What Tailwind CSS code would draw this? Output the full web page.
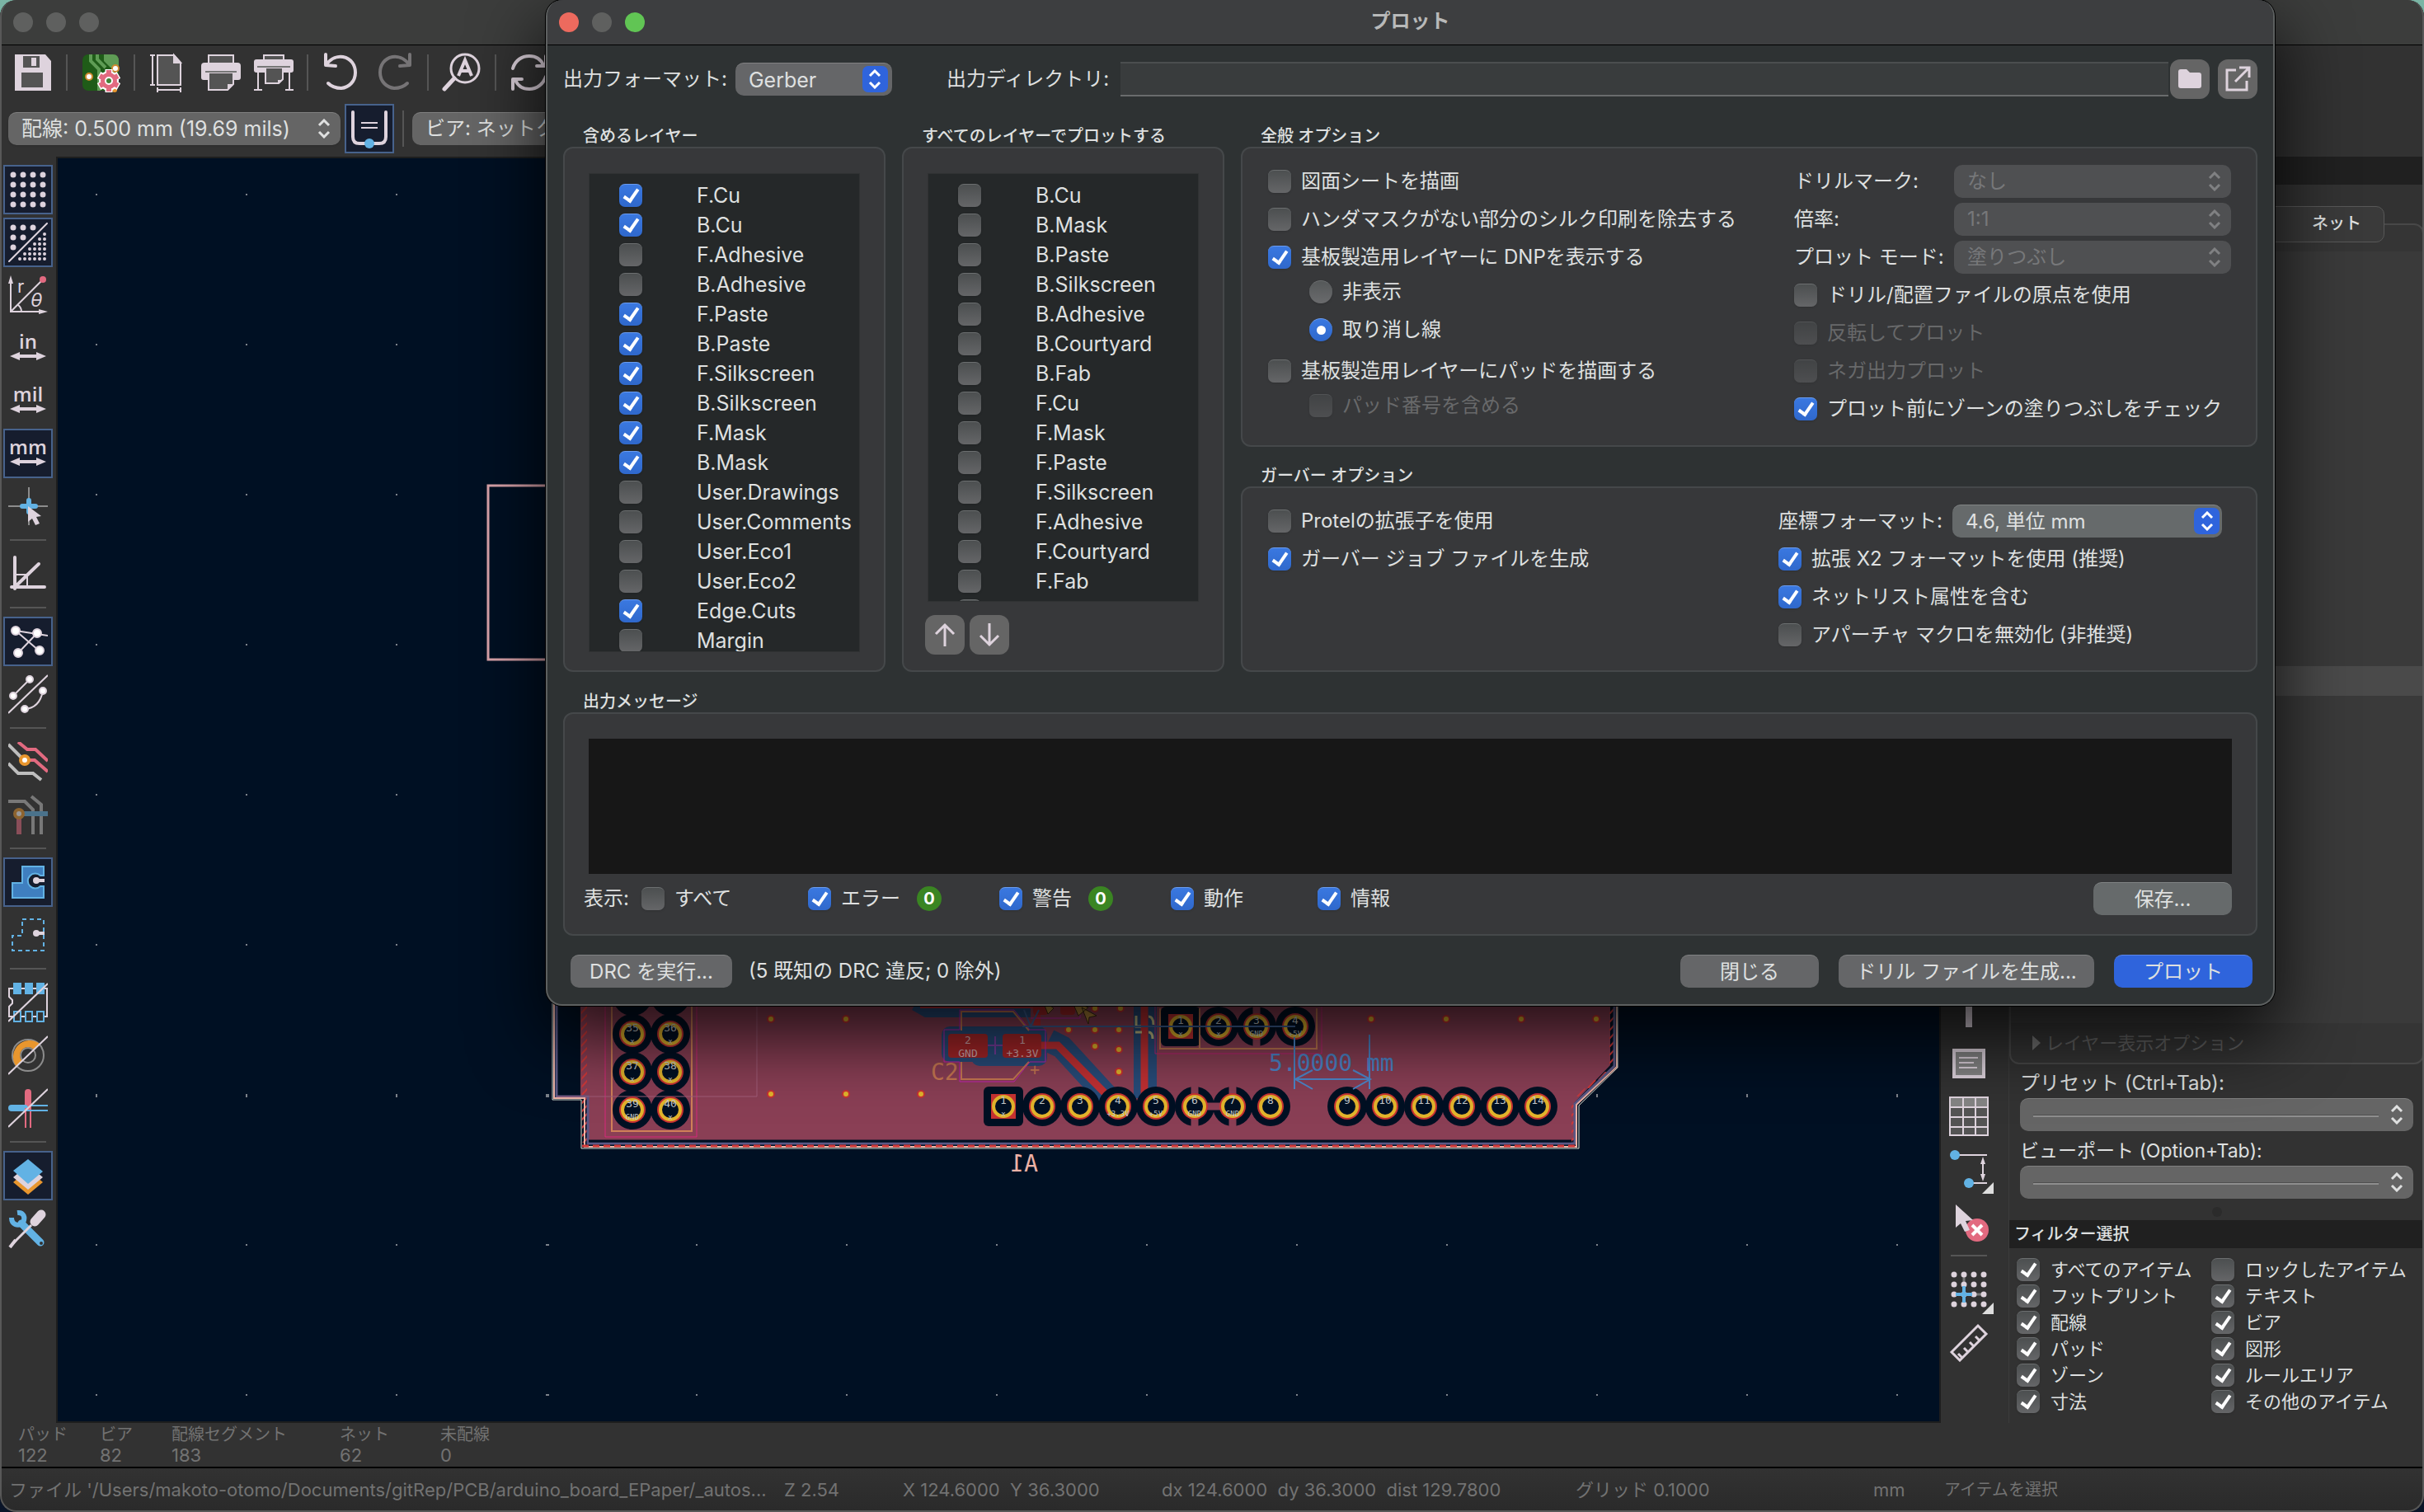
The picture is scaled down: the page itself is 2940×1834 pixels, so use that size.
<!DOCTYPE html>
<html lang="ja">
<head>
  <meta charset="UTF-8" />
  <meta name="viewport" content="width=device-width, initial-scale=1" />
  <title>プロット</title>
  <script src="https://cdn.jsdelivr.net/npm/@tailwindcss/browser@4"></script>
</head>
<body class="min-h-screen bg-linear-to-b from-[#7ab5a5] to-[#0a1428] font-['Inter','Noto_Sans_CJK_JP',sans-serif] text-[24px] leading-7 text-[#dfe0e0]">

  <!-- Editor window -->
  <div class="relative flex min-h-screen flex-col overflow-hidden rounded-[20px] bg-[#323232]">

    <!-- Title bar -->
    <header class="flex h-[55px] shrink-0 items-center gap-4 border-b border-black bg-[#3c3d3c] pl-4">
      <span class="size-6 rounded-full bg-[#5f605f]"></span>
      <span class="size-6 rounded-full bg-[#5f605f]"></span>
      <span class="size-6 rounded-full bg-[#5f605f]"></span>
    </header>

    <!-- Main toolbar -->
    <div class="flex h-[66px] shrink-0 items-center gap-1 pl-[10px]">
      <button class="grid size-[60px] place-items-center" aria-label="保存">
        <svg class="size-12" viewBox="0 0 48 48"><path fill="#ded3dd" d="M2 2h37l7 8v36H2z"/><path fill="#545454" d="M12 4h20v14H12zM10 24h26v18H10z"/><path fill="#ded3dd" d="M22 6h6v10h-6z"/></svg>
      </button>
      <span class="mx-[6px] h-11 w-[2px] bg-[#555]"></span>
      <button class="grid size-[60px] place-items-center" aria-label="基板の設定">
        <svg class="size-12" viewBox="0 0 48 48">
          <rect x="2" y="2" width="44" height="44" rx="7" fill="#1f5c18"/>
          <path d="M28 2h11q7 0 7 8v8H36l-8-8z" fill="#5f9c55"/>
          <path d="M12 2v8l10 10v26M20 2v6l10 10" fill="none" stroke="#5f9c55" stroke-width="4"/>
          <circle cx="10" cy="29" r="4" fill="#fff" stroke="#cf8a30" stroke-width="2"/>
          <circle cx="42" cy="19" r="4" fill="#fff" stroke="#cf8a30" stroke-width="2"/>
          <circle cx="41" cy="45" r="3" fill="#e8962e"/>
          <g stroke="#fff" stroke-width="9"><path d="M34 20v28M22 27l24 14M22 41l24-14"/></g>
          <circle cx="34" cy="34" r="11" fill="#e26a80" stroke="#fff" stroke-width="2"/>
          <g stroke="#e26a80" stroke-width="6"><path d="M34 21v26M23 28l22 12M23 40l22-12"/></g>
          <circle cx="34" cy="34" r="4" fill="#3f8034" stroke="#fff" stroke-width="2"/>
        </svg>
      </button>
      <span class="mx-[6px] h-11 w-[2px] bg-[#555]"></span>
      <button class="grid size-[60px] place-items-center" aria-label="ページ設定">
        <svg class="size-12" viewBox="0 0 48 48" fill="none" stroke="#ded3dd" stroke-width="2"><path d="M2 3h6M2 39h6M5 3v36M11 42v6M39 42v6M11 45h28"/><path fill="#545454" d="M11 3h20l8 9v27H11z"/><path fill="#ded3dd" d="M31 3v9h8z"/></svg>
      </button>
      <button class="grid size-[60px] place-items-center" aria-label="印刷">
        <svg class="size-12" viewBox="0 0 48 48"><path fill="#545454" stroke="#ded3dd" stroke-width="2" d="M9 3h30v12H9z"/><path fill="#ded3dd" d="M4 12h40q4 0 4 4v14q0 3-3 3H3q-3 0-3-3V16q0-4 4-4z"/><path fill="#545454" stroke="#ded3dd" stroke-width="2" d="M9 24h30v14l-7 7H9z"/><path fill="#ded3dd" d="M32 38h7l-7 8z"/><path fill="#777" d="M5 22h38v2H5z"/></svg>
      </button>
      <button class="grid size-[60px] place-items-center" aria-label="プロット">
        <svg class="size-12" viewBox="0 0 48 48"><path fill="#545454" stroke="#ded3dd" stroke-width="2" d="M12 3h24v8H12z"/><path fill="#ded3dd" d="M3 8h42q3 0 3 3v10q0 3-3 3H3q-3 0-3-3V11q0-3 3-3z"/><path fill="#545454" stroke="#ded3dd" stroke-width="2" d="M14 18h21v14l-5 5H14z"/><path fill="#ded3dd" d="M29 33h6l-6 5z"/><path fill="#777" d="M4 16h40v2H4z"/><path fill="none" stroke="#ded3dd" stroke-width="2" d="M5 24v21M43 24v21M0 45h10M38 45h10"/></svg>
      </button>
      <span class="mx-[6px] h-11 w-[2px] bg-[#555]"></span>
      <button class="grid size-[60px] place-items-center" aria-label="元に戻す">
        <svg class="size-12" viewBox="0 0 48 48" fill="none" stroke="#ded3dd" stroke-width="4" stroke-linecap="round" stroke-linejoin="round"><path d="M5 2v13l12 1M6 14C12 6 20 4 26 5c10 2 15 10 15 19 0 11-8 18-17 19-7 0-12-2-16-6"/></svg>
      </button>
      <button class="grid size-[60px] place-items-center" aria-label="やり直し">
        <svg class="size-12" viewBox="0 0 48 48" fill="none" stroke="#767476" stroke-width="4" stroke-linecap="round" stroke-linejoin="round"><path d="M43 2v13l-12 1M42 14C36 6 28 4 22 5 12 7 7 15 7 24c0 11 8 18 17 19 7 0 12-2 16-6"/></svg>
      </button>
      <span class="mx-[6px] h-11 w-[2px] bg-[#555]"></span>
      <button class="grid size-[60px] place-items-center" aria-label="検索">
        <svg class="size-12" viewBox="0 0 48 48" fill="none" stroke="#ded3dd" stroke-width="3"><circle cx="28" cy="19" r="17"/><path stroke-width="5" stroke-linecap="round" d="M15 31 3 44"/><path stroke-width="4" d="M20 28l8-19 8 19M23 22h10"/></svg>
      </button>
      <span class="mx-[6px] h-11 w-[2px] bg-[#555]"></span>
      <button class="grid size-[60px] place-items-center" aria-label="更新">
        <svg class="size-12" viewBox="0 0 48 48" fill="none" stroke="#ded3dd" stroke-width="4" stroke-linecap="round" stroke-linejoin="round"><path d="M4 19C7 9 15 4 24 4c8 0 14 4 17 11M44 4v12H33M44 29c-3 9-11 15-20 15-8 0-14-4-17-11M4 44V32h11"/></svg>
      </button>
    </div>

    <div class="flex h-[69px] shrink-0 items-center pl-[10px]">
      <div class="relative">
        <select aria-label="配線幅" class="h-10 w-[403px] appearance-none rounded-[10px] border-t border-[#808080] bg-[#656565] pl-4 text-[25px] shadow-sm">
          <option>配線: 0.500 mm (19.69 mils)</option>
        </select>
        <svg class="pointer-events-none absolute top-[8px] right-[12px] h-6 w-4" viewBox="0 0 16 24" fill="none" stroke="#dfe0e0" stroke-width="3"><path d="M2 8l6-6 6 6M2 16l6 6 6-6"/></svg>
      </div>
      <button class="ml-[5px] grid size-[60px] place-items-center border-2 border-[#47628c] bg-[#161d2e]" aria-label="自動配線幅">
        <svg class="size-12" viewBox="0 0 48 48" fill="none" stroke="#ded3dd" stroke-width="4" stroke-linecap="round"><path d="M4 4v30q0 8 8 8h24q8 0 8-8V4"/><path stroke-width="2" stroke-linecap="butt" d="M14 17h20M14 23h20"/><circle cx="24" cy="42" r="6" fill="#62b2e4" stroke="none"/></svg>
      </button>
      <span class="mx-[10px] h-11 w-[2px] bg-[#555]"></span>
      <select aria-label="ビアサイズ" class="h-10 w-[403px] appearance-none rounded-[10px] border-t border-[#808080] bg-[#656565] pl-4">
        <option>ビア: ネットクラスのサイズを使用</option>
      </select>
    </div>

    <div class="flex flex-1">
      <!-- Display toolbar -->
      <nav class="flex w-[68px] flex-col items-center gap-1 pt-[10px]">
        <button class="grid size-[60px] place-items-center border-2 border-[#47628c] bg-[#161d2e]" aria-label="グリッド">
          <svg class="size-12" viewBox="0 0 48 48" stroke="#ded3dd" stroke-width="7" stroke-linecap="round" stroke-dasharray="0 12"><path d="M6 6h37M6 18h37M6 30h37M6 42h37"/></svg>
        </button>
        <button class="grid size-[60px] place-items-center border-2 border-[#47628c] bg-[#161d2e]" aria-label="グリッドの上書き">
          <svg class="size-12" viewBox="0 0 48 48" stroke="#ded3dd" stroke-linecap="round"><path stroke-width="7" stroke-dasharray="0 12" d="M6 6h25M6 18h13M6 30h1"/><path stroke-width="2" d="M1 47 47 1"/><path stroke-width="4" stroke-dasharray="0 6" d="M44 14h1M38 20h7M32 26h13M26 32h19M20 38h25M14 44h31"/></svg>
        </button>
        <button class="grid size-[60px] place-items-center" aria-label="極座標">
          <svg class="size-12" viewBox="0 0 48 48" fill="none" stroke="#ded3dd" stroke-width="2"><path d="M3 6v38h38M3 44 41 6M12 36q4 3 4 8"/><path fill="#ded3dd" stroke="none" d="M3 0l3 10H0zM48 44l-11-3v6z"/><circle cx="42" cy="5" r="4" fill="#e26a80" stroke="none"/><text x="11" y="21" fill="#ded3dd" stroke="none" font-size="22">r</text><text x="27" y="38" fill="#ded3dd" stroke="none" font-size="23" font-style="italic">θ</text></svg>
        </button>
        <button class="grid size-[60px] place-items-center" aria-label="インチ">
          <svg class="size-12 overflow-visible" viewBox="0 0 48 48" fill="#ded3dd"><text x="24" y="25" text-anchor="middle" font-size="24" font-weight="600" font-family="Open Sans">in</text><path d="M2 34l12-5v3h20v-3l12 5-12 5v-3H14v3z"/></svg>
        </button>
        <button class="grid size-[60px] place-items-center" aria-label="ミル">
          <svg class="size-12 overflow-visible" viewBox="0 0 48 48" fill="#ded3dd"><text x="24" y="25" text-anchor="middle" font-size="24" font-weight="600" font-family="Open Sans">mil</text><path d="M2 34l12-5v3h20v-3l12 5-12 5v-3H14v3z"/></svg>
        </button>
        <button class="grid size-[60px] place-items-center border-2 border-[#47628c] bg-[#161d2e]" aria-label="ミリメートル">
          <svg class="size-12 overflow-visible" viewBox="0 0 48 48" fill="#ded3dd"><text x="24" y="25" text-anchor="middle" font-size="24" font-weight="600" font-family="Open Sans">mm</text><path d="M2 34l12-5v3h20v-3l12 5-12 5v-3H14v3z"/></svg>
        </button>
        <button class="grid size-[60px] place-items-center" aria-label="十字カーソル">
          <svg class="size-12" viewBox="0 0 48 48"><path d="M25 1v46M0 24h48" stroke="#8c8c8c" stroke-width="2"/><path d="M25 17v14M17 24h16" stroke="#62b2e4" stroke-width="6" stroke-linecap="round"/><path fill="#ded3dd" d="M24 24l16 12-6 1 4 8-5 2-4-8-5 4z"/></svg>
        </button>
        <span class="my-[6px] h-[2px] w-11 bg-[#555]"></span>
        <button class="grid size-[60px] place-items-center" aria-label="角度制限">
          <svg class="size-12" viewBox="0 0 48 48" fill="none" stroke="#ded3dd" stroke-width="4" stroke-linecap="round"><path d="M8 4v38M4 40h40M8 40 37 12"/><path stroke-width="2" d="M8 25h15v14"/></svg>
        </button>
        <span class="my-[6px] h-[2px] w-11 bg-[#555]"></span>
        <button class="grid size-[60px] place-items-center border-2 border-[#47628c] bg-[#161d2e]" aria-label="ラッツネスト">
          <svg class="size-12" viewBox="0 0 48 48" fill="#fff" stroke="#ded3dd" stroke-width="2"><path d="M9 11l39 6M9 11l28 24M12 38l23-24"/><circle cx="9" cy="11" r="5"/><circle cx="35" cy="14" r="5"/><circle cx="12" cy="38" r="5"/><circle cx="38" cy="35" r="5"/></svg>
        </button>
        <button class="grid size-[60px] place-items-center" aria-label="曲線ラッツネスト">
          <svg class="size-12" viewBox="0 0 48 48" fill="#fff" stroke="#ded3dd" stroke-width="2"><path fill="none" d="M0 47 48 1M6 26 26 6M20 42q18-1 22-22"/><circle cx="6" cy="26" r="4"/><circle cx="26" cy="6" r="4"/><circle cx="20" cy="42" r="4"/><circle cx="42" cy="20" r="4"/></svg>
        </button>
        <span class="my-[6px] h-[2px] w-11 bg-[#555]"></span>
        <button class="grid size-[60px] place-items-center" aria-label="非アクティブレイヤー">
          <svg class="size-12" viewBox="0 0 48 48" fill="none" stroke-width="4"><path stroke="#bdbdbd" d="M0 3l18 18M0 26l12 12h18l10 8"/><path stroke="#e26a80" d="M12 0l11 9h10l15 14M24 22h8l16 14"/><circle cx="20" cy="22" r="5" fill="#fff" stroke="#e8962e"/></svg>
        </button>
        <button class="grid size-[60px] place-items-center opacity-50" aria-label="ネットハイライト">
          <svg class="size-12" viewBox="0 0 48 48" fill="none" stroke-width="4"><path stroke="#bdbdbd" d="M0 8h20l10 10v30M28 2l12 10v36"/><path stroke="#62b2e4" stroke-width="6" d="M14 23h34"/><path stroke="#e26a80" stroke-width="6" d="M13 28v20"/><circle cx="13" cy="23" r="5" fill="#fff" stroke="#e8962e"/></svg>
        </button>
        <span class="my-[6px] h-[2px] w-11 bg-[#555]"></span>
        <button class="grid size-[60px] place-items-center border-2 border-[#47628c] bg-[#161d2e]" aria-label="塗りつぶしゾーン">
          <svg class="size-12" viewBox="0 0 48 48"><path fill="#3f7fc0" stroke="#62b2e4" stroke-width="2" d="M17 5h26v11h-4a9 9 0 1 0 0 13h4v14H5V25h12z"/><circle cx="34" cy="22" r="4" fill="#ded3dd"/><path d="M34 22h10" stroke="#ded3dd" stroke-width="4"/></svg>
        </button>
        <button class="grid size-[60px] place-items-center" aria-label="ゾーン外形">
          <svg class="size-12" viewBox="0 0 48 48"><path fill="none" stroke="#62b2e4" stroke-width="2" stroke-dasharray="5 4" d="M17 5h26v38H5V25h12z"/><circle cx="34" cy="22" r="4" fill="#ded3dd"/><path d="M34 22h10" stroke="#ded3dd" stroke-width="4"/></svg>
        </button>
        <span class="my-[6px] h-[2px] w-11 bg-[#555]"></span>
        <button class="grid size-[60px] place-items-center" aria-label="パッド外形">
          <svg class="size-12" viewBox="0 0 48 48" fill="none" stroke-width="2"><path stroke="#ded3dd" d="M1 7h46v34H1V29l4-4v-4l-4-4z"/><path fill="#62b2e4" d="M6 0h10v14H6zM20 0h10v14H20zM34 0h10v14H34z"/><path fill="#323232" stroke="#62b2e4" d="M7 35h8v12H7zM21 35h8v12h-8zM35 35h8v12h-8z"/><path stroke="#ded3dd" d="M0 47 48 1"/></svg>
        </button>
        <button class="grid size-[60px] place-items-center" aria-label="ビア外形">
          <svg class="size-12" viewBox="0 0 48 48" fill="none"><circle cx="24" cy="24" r="19" stroke="#8c8c8c" stroke-width="2"/><circle cx="24" cy="24" r="9" stroke="#8c8c8c" stroke-width="2"/><path fill="#e8962e" d="M10 38A20 20 0 0 1 38 10L31 17A9 9 0 0 0 17 31z"/><path stroke="#ded3dd" stroke-width="2" d="M0 47 48 1"/></svg>
        </button>
        <button class="grid size-[60px] place-items-center" aria-label="配線外形">
          <svg class="size-12" viewBox="0 0 48 48" fill="none"><path stroke="#e26a80" stroke-width="8" stroke-linecap="round" d="M24 5v19"/><path stroke="#62b2e4" stroke-width="8" stroke-linecap="round" d="M4 24h16"/><path stroke="#e26a80" stroke-width="2" d="M21 24v24M27 20v28"/><path stroke="#62b2e4" stroke-width="2" d="M28 21h20M22 27h26"/><path stroke="#ded3dd" stroke-width="2" d="M0 47 48 1"/></svg>
        </button>
        <span class="my-[6px] h-[2px] w-11 bg-[#555]"></span>
        <button class="grid size-[60px] place-items-center border-2 border-[#47628c] bg-[#161d2e]" aria-label="外観マネージャー">
          <svg class="size-12" viewBox="0 0 48 48"><path fill="#e8962e" d="M6 32 24 17l18 15-18 15z"/><path fill="#ded3dd" d="M6 26 24 11l18 15-18 15z"/><path fill="#62b2e4" d="M6 18 24 4l18 15-18 15z"/></svg>
        </button>
        <button class="grid size-[60px] place-items-center" aria-label="プロパティ">
          <svg class="size-12" viewBox="0 0 48 48"><path d="M16 18l23 23" stroke="#62b2e4" stroke-width="9" stroke-linecap="round"/><path fill="none" stroke="#62b2e4" stroke-width="6" d="M11 5c8-1 10 6 7 12M4 11c0 8 7 11 14 7"/><circle cx="40" cy="42" r="2" fill="#323232"/><path d="M28 20 6 42" stroke="#ded3dd" stroke-width="3"/><path d="M9 38l-7 9" stroke="#ded3dd" stroke-width="4"/><path d="M32 16l8-9" stroke="#ded3dd" stroke-width="11" stroke-linecap="round"/></svg>
        </button>
      </nav>

      <!-- Board canvas -->
      <main class="relative flex-1 overflow-hidden border-2 border-[#1e1e1e] bg-[#001023]">
        <svg class="absolute inset-0 size-full" font-family="DejaVu Sans Mono">
          <defs>
            <pattern id="hatch" width="13" height="10" patternUnits="userSpaceOnUse"><path d="M2 10 11 0" stroke="#d03838" stroke-width="2"/></pattern>
          </defs>
          <g transform="translate(-70 -192)">
            <g id="grid-dots" fill="#7d838b"></g>
            <path d="M760 589H592v211h168" fill="none" stroke="#dba4ab" stroke-width="3"/>

            <!-- copper zone and edge -->
            <path d="M704 1100h1249v192l-44 46v45H714v-51h-10z" fill="#8a3f55"/>
            <path d="M704 1100h8v288h1200v-50l46-46v-192h-6v190l-46 46v50H706z" fill="url(#hatch)"/>
            <path d="M675 1100v230h38v57h1197v-48l48-46v-193" fill="none" stroke="#5a5886" stroke-width="3"/>
            <path d="M672 1100v232h37v59h1203v-51l49-46v-194" fill="none" stroke="#ecb2a6" stroke-width="2"/>
            <path d="M670 1100v234h35v59h1210v-52l47-46v-195" fill="none" stroke="#d8dccf" stroke-width="1"/>
            <path d="M714 1384h1192" stroke="#001023" stroke-width="3"/>
            <path d="M706 1390h1206" stroke="#d03838" stroke-width="3" stroke-dasharray="8 5"/>

            <!-- pin header 35-40 -->
            <g fill="#001023">
              <circle cx="767" cy="1208" r="24"/><circle cx="813" cy="1208" r="24"/>
              <circle cx="767" cy="1254" r="24"/><circle cx="813" cy="1254" r="24"/>
              <circle cx="767" cy="1300" r="24"/><circle cx="813" cy="1300" r="24"/>
              <circle cx="767" cy="1346" r="24"/><circle cx="813" cy="1346" r="24"/>
            </g>
            <path d="M742 1200v172h97v-172" fill="none" stroke="#d08058" stroke-width="2"/>
            <path d="M734 1200v179h111v-179" fill="none" stroke="#d8287c" stroke-width="1"/>
            <path d="M675 1330h243v-130" fill="none" stroke="#a05c78" stroke-width="1"/>

            <!-- tracks -->
            <path d="M1110 1218l14 8h126" fill="none" stroke="#284c7a" stroke-width="16"/>
            <path d="M1116 1219h142v26l-24 20" fill="none" stroke="#b82c30" stroke-width="8"/>
            <g fill="#284c7a"><rect x="1142" y="1245" width="60" height="43" rx="10"/><rect x="1178" y="1245" width="92" height="48" rx="10"/></g>
            <path d="M1272 1262l16 8 66 72M1389 1200v132" fill="none" stroke="#284c7a" stroke-width="28"/>
            <path d="M1262 1268h21l73 74M1388 1200v130l14 12" fill="none" stroke="#c23033" stroke-width="9"/>
            <rect x="1150" y="1254" width="48" height="29" rx="4" fill="#a82628"/>
            <rect x="1216" y="1254" width="47" height="29" rx="4" fill="#a82628"/>
            <path d="M1166 1250v-23h63l19 23M1166 1288v21h63l19-21" fill="none" stroke="#c87852" stroke-width="2"/>
            <path d="M1145 1249h19v-24h66l19 24h19v39h-19l-19 24h-66v-24h-19z" fill="none" stroke="#c422b4" stroke-width="1"/>
            <path d="M1198 1268h18M1207 1257v22" stroke="#7a3fa0" stroke-width="2"/>
            <g fill="#d3adb0" font-size="13" text-anchor="middle"><text x="1174" y="1266">2</text><text x="1174" y="1282">GND</text><text x="1240" y="1266">1</text><text x="1240" y="1282">+3.3V</text></g>
            <text x="1129" y="1310" font-size="28" fill="#c87852">C2</text>
            <text x="1249" y="1304" font-size="20" fill="#c87852">+</text>
            <rect x="1253" y="1205" width="18" height="26" rx="4" fill="#a82628"/><rect x="1286" y="1205" width="18" height="26" rx="4" fill="#a82628"/>
            <path d="M1250 1235h60v-30" fill="none" stroke="#c422b4" stroke-width="1"/>
            <path d="M1378 1232v13h6M1393 1233q6 0 6 10M1377 1252h8M1393 1252q5 0 5 8" fill="none" stroke="#c9c288" stroke-width="3"/>

            <!-- pads are filled in by drawPads() -->
            <g id="pads"></g>
            <path d="M1407 1223v49h190v-49M1455 1223v49" fill="none" stroke="#c07850" stroke-width="2"/>
            <path d="M1401 1200v78h202v-78" fill="none" stroke="#c42478" stroke-width="1"/>
            <path d="M1240 1245h331M1250 1245l-8-20M1250 1245l10-20" fill="none" stroke="#3f6298" stroke-width="2"/>
            <g fill="#b8893a" stroke="#3a2a10"><path d="M1264 1212l14 11-7 7zM1300 1214l20 8-12 10zM1312 1222l18 10-9 2-1 8z"/></g>

            <!-- dimension -->
            <g fill="none" stroke="#4d88cc" stroke-width="2"><path d="M1570 1258v63M1661 1255v66M1571 1309h91M1592 1298l-21 11 21 12M1641 1298l21 11-21 12"/></g>
            <text x="1539" y="1299" font-size="28" fill="#4d88cc">5.0000 mm</text>
            <text transform="translate(1259 1421) scale(-1 1)" font-size="28" fill="#ecb2a6">A1</text>
          </g>
        </svg>
      </main>

      <!-- Drawing toolbar -->
      <nav class="mr-[14px] flex w-[68px] flex-col items-center justify-end gap-1 pb-[68px]">
        <button class="grid size-[60px] place-items-center" aria-label="テキスト">
          <svg class="size-12" viewBox="0 0 48 48"><path fill="#ded3dd" d="M4 4h40v8H28v32h-8V12H4z"/></svg>
        </button>
        <button class="grid size-[60px] place-items-center" aria-label="テキストボックス">
          <svg class="size-12" viewBox="0 0 48 48"><path fill="#848484" stroke="#ded3dd" stroke-width="4" d="M6 8h36v32H6z"/><path stroke="#ded3dd" stroke-width="2" d="M12 17h23M12 23h18M12 29h22"/></svg>
        </button>
        <button class="grid size-[60px] place-items-center" aria-label="表">
          <svg class="size-12" viewBox="0 0 48 48"><path fill="#545454" d="M1 1h46v46H1z"/><path fill="#848484" d="M1 1h46v12H1z"/><path fill="none" stroke="#ded3dd" stroke-width="2" d="M1 1h46v46H1zM1 13h46M1 25h46M1 37h46M17 1v46M32 1v46"/></svg>
        </button>
        <button class="relative grid size-[60px] place-items-center" aria-label="寸法線">
          <svg class="size-12" viewBox="0 0 48 48"><path stroke="#ded3dd" stroke-width="2" d="M6 7h40M24 41h22M41 12v24"/><path fill="#ded3dd" d="M41 9l3 9h-6zM41 39l3-9h-6z"/><circle cx="7" cy="7" r="6" fill="#62b2e4"/><circle cx="24" cy="41" r="6" fill="#62b2e4"/></svg>
          <svg class="absolute right-0 bottom-0 size-[14px]" viewBox="0 0 14 14"><path fill="#ddd" d="M14 0v14H0z"/></svg>
        </button>
        <button class="grid size-[60px] place-items-center" aria-label="削除ツール">
          <svg class="size-12" viewBox="0 0 48 48"><circle cx="34" cy="34" r="14" fill="#e26a80"/><path fill="#ded3dd" d="M8 3l21 19-9 1 5 11-6 2-5-10-6 5z"/><path stroke="#fff" stroke-width="4" d="M28 28l12 12M40 28 28 40"/></svg>
        </button>
        <span class="my-[6px] h-[2px] w-11 bg-[#555]"></span>
        <button class="relative grid size-[60px] place-items-center" aria-label="グリッド原点">
          <svg class="size-12" viewBox="0 0 48 48"><path d="M18 4v26h26" fill="none" stroke="#777" stroke-width="3"/><path stroke="#ded3dd" stroke-width="7" stroke-linecap="round" stroke-dasharray="0 12" d="M6 6h37M6 18h37M6 30h37M6 42h37"/><path d="M18 20v20M8 30h20" stroke="#62b2e4" stroke-width="4"/></svg>
          <svg class="absolute right-0 bottom-0 size-[14px]" viewBox="0 0 14 14"><path fill="#ddd" d="M14 0v14H0z"/></svg>
        </button>
        <button class="grid size-[60px] place-items-center" aria-label="測定ツール">
          <svg class="size-12" viewBox="0 0 48 48" fill="none" stroke="#ded3dd" stroke-width="3"><path d="M3 36 35 4l10 10-32 32zM11 38l4 4M18 31l4 4M25 24l4 4M32 17l4 4"/></svg>
        </button>
      </nav>

      <!-- Appearance panel -->
      <aside class="flex w-[504px] flex-col border-l border-[#3c3c3c]">
        <div class="h-[34px] bg-[#202020]"></div>
        <div class="relative mt-[47px] flex h-[1020px] flex-col rounded-xl border-2 border-[#484848] bg-[#353535]">
          <div class="absolute -top-[23px] right-[46px] flex h-11 w-[300px] items-center justify-end rounded-[10px] border border-[#585858] bg-[#3a3a3a] pr-[27px] pb-[2px]">
            <button class="text-[20px] font-medium">ネット</button>
          </div>
          <div class="mt-8 h-[936px] bg-[#3a3a3a] pt-[503px]"><div class="h-9 bg-[#4a4a4a]"></div></div>
          <button class="mt-[10px] ml-[26px] flex h-7 items-center gap-[6px] text-[22px] text-[#646464]">
            <svg class="h-[18px] w-[10px]" viewBox="0 0 10 18"><path fill="#747474" d="M0 0l10 9-10 9z"/></svg>レイヤー表示オプション
          </button>
        </div>
        <div class="flex flex-col pt-[9px] pr-[13px] pb-[26px] pl-[13px]">
          <label for="preset">プリセット (Ctrl+Tab):</label>
          <div class="relative mt-1">
            <select id="preset" class="h-10 w-full appearance-none rounded-[10px] border-t border-[#808080] bg-[#656565]"></select>
            <span class="pointer-events-none absolute top-[20px] right-[42px] left-[16px] h-[3px] border-t border-b border-t-[#505050] border-b-[#8e8e8e] bg-[#8e8e8e]"></span>
            <svg class="pointer-events-none absolute top-[8px] right-[12px] h-6 w-4" viewBox="0 0 16 24" fill="none" stroke="#dfe0e0" stroke-width="3"><path d="M2 8l6-6 6 6M2 16l6 6 6-6"/></svg>
          </div>
          <label for="viewport" class="mt-[10px] text-[23px]">ビューポート (Option+Tab):</label>
          <div class="relative mt-1">
            <select id="viewport" class="h-10 w-full appearance-none rounded-[10px] border-t border-[#808080] bg-[#656565]"></select>
            <span class="pointer-events-none absolute top-[20px] right-[42px] left-[16px] h-[3px] border-t border-b border-t-[#505050] border-b-[#8e8e8e] bg-[#8e8e8e]"></span>
            <svg class="pointer-events-none absolute top-[8px] right-[12px] h-6 w-4" viewBox="0 0 16 24" fill="none" stroke="#dfe0e0" stroke-width="3"><path d="M2 8l6-6 6 6M2 16l6 6 6-6"/></svg>
          </div>
          <span class="mx-auto mt-[10px] -mb-[22px] size-3 rounded-full bg-[#2b2b2b]"></span>
        </div>
        <h2 class="flex h-[34px] items-center bg-[#202020] pl-[6px] text-[20px] font-medium">フィルター選択</h2>
        <div id="filters" class="grid grid-cols-[236px_1fr] pt-[10px] pl-[9px] text-[22px]"></div>
      </aside>
    </div>

    <!-- Message panel -->
    <dl class="flex h-[53px] shrink-0 pt-[2px] pl-[22px] text-[20px] leading-[25px] text-[#727272]">
      <div class="w-[99px]"><dt>パッド</dt><dd class="text-[22px]">122</dd></div>
      <div class="w-[87px]"><dt>ビア</dt><dd class="text-[22px]">82</dd></div>
      <div class="w-[204px]"><dt>配線セグメント</dt><dd class="text-[22px]">183</dd></div>
      <div class="w-[122px]"><dt>ネット</dt><dd class="text-[22px]">62</dd></div>
      <div><dt>未配線</dt><dd class="text-[22px]">0</dd></div>
    </dl>

    <!-- Status bar -->
    <footer class="flex h-[55px] shrink-0 items-center border-t-2 border-black bg-linear-to-b from-[#323232] to-[#2a2a2a] pb-[2px] pl-[11px] text-[22px] whitespace-pre text-[#727272]">
      <span class="w-[940px]">ファイル '/Users/makoto-otomo/Documents/gitRep/PCB/arduino_board_EPaper/_autos...</span>
      <span class="w-[144px]">Z 2.54</span>
      <span class="w-[314px]">X 124.6000  Y 36.3000</span>
      <span class="w-[502px]">dx 124.6000  dy 36.3000  dist 129.7800</span>
      <span class="w-[361px]">グリッド 0.1000</span>
      <span class="w-[86px]">mm</span>
      <span class="text-[20px]">アイテムを選択</span>
    </footer>
    <div class="pointer-events-none absolute inset-0 rounded-[20px] border-2 border-t-0 border-[#585858]"></div>
  </div>

  <!-- Plot dialog -->
  <section class="absolute top-0 right-[181px] left-[662px] overflow-hidden rounded-[20px] border-2 border-t-0 border-[#5d6060] bg-[#2e3233] shadow-[0_0_0_1px_#000,0_36px_84px_6px_rgba(0,0,0,0.75)]" role="dialog" aria-labelledby="dialog-title">
    <header class="relative flex h-[55px] items-center gap-4 border-b border-black bg-[#3d3e40] pl-[14px]">
      <button class="size-6 rounded-full bg-[#ed6a5e]" aria-label="閉じる"></button>
      <button class="size-6 rounded-full bg-[#5f605f]" aria-label="しまう"></button>
      <button class="size-6 rounded-full bg-[#61c554]" aria-label="拡大"></button>
      <h1 id="dialog-title" class="pointer-events-none absolute inset-x-0 top-3 text-center font-bold text-[#b8b9b9]">プロット</h1>
    </header>

    <div class="px-[19px] pb-[20px]">
      <!-- Output -->
      <div class="flex items-center pt-[17px]">
        <label for="format">出力フォーマット:</label>
        <div class="relative ml-[10px]">
          <select id="format" class="h-10 w-[190px] appearance-none rounded-[10px] border-t border-[#808182] bg-[#656668] pl-4 text-[25px]">
            <option>Gerber</option>
          </select>
          <span class="pointer-events-none absolute top-1 right-[5px] grid h-8 w-[31px] place-items-center rounded-[7px] bg-[#2f64dc]">
            <svg class="h-6 w-4" viewBox="0 0 16 24" fill="none" stroke="#fff" stroke-width="3"><path d="M2 8l6-6 6 6M2 16l6 6 6-6"/></svg>
          </span>
        </div>
        <label for="outdir" class="ml-[66px]">出力ディレクトリ:</label>
        <input id="outdir" type="text" class="ml-[14px] h-[42px] flex-1 border-t-2 border-b-2 border-t-[#4b4e4f] border-b-[#6a6c6d] bg-[#393c3d] px-2" />
        <button class="ml-[2px] grid size-12 place-items-center rounded-xl bg-[#656565]" aria-label="参照">
          <svg class="size-8" viewBox="0 0 32 32"><path fill="#ded3dd" d="M2 7q0-3 3-3h7l4 4h11q3 0 3 3v13q0 3-3 3H5q-3 0-3-3z"/></svg>
        </button>
        <button class="ml-[10px] grid size-12 place-items-center rounded-xl bg-[#656565]" aria-label="開く">
          <svg class="size-8" viewBox="0 0 32 32" fill="none" stroke="#ded3dd" stroke-width="3"><path d="M14 5H3v24h24V18M18 2h12v12M30 2 13 19"/></svg>
        </button>
      </div>

      <div class="mt-[30px] grid grid-cols-[391px_391px_1fr] gap-5">
        <!-- Included layers -->
        <div class="flex flex-col">
          <h2 class="h-7 pt-[1px] pl-6 text-[20px] font-medium">含めるレイヤー</h2>
          <div class="flex-1 rounded-xl border-2 border-[#45484a] bg-[#37383a] px-[29px] pt-[30px]">
            <ul id="layers" class="h-[581px] overflow-hidden border border-[#303233] bg-[#252829] pt-2"></ul>
          </div>
        </div>

        <!-- Plot on all layers -->
        <div class="flex flex-col">
          <h2 class="h-7 pt-[1px] pl-6 text-[20px] font-medium">すべてのレイヤーでプロットする</h2>
          <div class="flex-1 rounded-xl border-2 border-[#45484a] bg-[#37383a] px-[29px] pt-[30px]">
            <ul id="all-layers" class="h-[520px] overflow-hidden border border-[#303233] bg-[#252829] pt-2"></ul>
            <div class="mt-4 -ml-[3px] flex gap-[6px]">
              <button class="grid size-12 place-items-center rounded-xl bg-[#656565]" aria-label="上へ">
                <svg class="size-8" viewBox="0 0 32 32" fill="none" stroke="#ded3dd" stroke-width="3"><path d="M16 30V4M5 15 16 4l11 11"/></svg>
              </button>
              <button class="grid size-12 place-items-center rounded-xl bg-[#656565]" aria-label="下へ">
                <svg class="size-8" viewBox="0 0 32 32" fill="none" stroke="#ded3dd" stroke-width="3"><path d="M16 2v26M5 17l11 11 11-11"/></svg>
              </button>
            </div>
          </div>
        </div>

        <div>
          <!-- General options -->
          <h2 class="h-7 pt-[1px] pl-6 text-[20px] font-medium">全般 オプション</h2>
          <div class="flex h-[364px] justify-between rounded-xl border-2 border-[#45484a] bg-[#37383a] pr-[30px] pl-[31px]">
            <div class="flex flex-col pt-[26px]">
              <label class="mb-[18px] flex items-center gap-3"><input type="checkbox" />図面シートを描画</label>
              <label class="mb-[18px] flex items-center gap-3"><input type="checkbox" />ハンダマスクがない部分のシルク印刷を除去する</label>
              <label class="mb-[14px] flex items-center gap-3"><input type="checkbox" checked />基板製造用レイヤーに DNPを表示する</label>
              <label class="mb-[18px] ml-[50px] flex items-center gap-3"><input type="radio" name="dnp" />非表示</label>
              <label class="mb-[22px] ml-[50px] flex items-center gap-3"><input type="radio" name="dnp" checked />取り消し線</label>
              <label class="mb-[14px] flex items-center gap-3"><input type="checkbox" />基板製造用レイヤーにパッドを描画する</label>
              <label class="ml-[50px] flex items-center gap-3 text-[#68696a]"><input type="checkbox" disabled />パッド番号を含める</label>
            </div>
            <div class="flex w-[530px] flex-col gap-[6px] pt-5">
              <div class="flex h-10 items-center justify-between">
                <label for="drill">ドリルマーク:</label>
                <div class="relative">
                  <select id="drill" disabled class="h-10 w-[336px] appearance-none rounded-[10px] bg-[#4f5052] pl-4 text-[#77787a] opacity-100"><option>なし</option></select>
                  <svg class="pointer-events-none absolute top-[8px] right-[12px] h-6 w-4" viewBox="0 0 16 24" fill="none" stroke="#808183" stroke-width="3"><path d="M2 8l6-6 6 6M2 16l6 6 6-6"/></svg>
                </div>
              </div>
              <div class="flex h-10 items-center justify-between">
                <label for="scale">倍率:</label>
                <div class="relative">
                  <select id="scale" disabled class="h-10 w-[336px] appearance-none rounded-[10px] bg-[#4f5052] pl-4 text-[#77787a] opacity-100"><option>1:1</option></select>
                  <svg class="pointer-events-none absolute top-[8px] right-[12px] h-6 w-4" viewBox="0 0 16 24" fill="none" stroke="#808183" stroke-width="3"><path d="M2 8l6-6 6 6M2 16l6 6 6-6"/></svg>
                </div>
              </div>
              <div class="flex h-10 items-center justify-between">
                <label for="mode">プロット モード:</label>
                <div class="relative">
                  <select id="mode" disabled class="h-10 w-[336px] appearance-none rounded-[10px] bg-[#4f5052] pl-4 text-[#77787a] opacity-100"><option>塗りつぶし</option></select>
                  <svg class="pointer-events-none absolute top-[8px] right-[12px] h-6 w-4" viewBox="0 0 16 24" fill="none" stroke="#808183" stroke-width="3"><path d="M2 8l6-6 6 6M2 16l6 6 6-6"/></svg>
                </div>
              </div>
              <label class="flex h-10 items-center gap-3"><input type="checkbox" />ドリル/配置ファイルの原点を使用</label>
              <label class="flex h-10 items-center gap-3 text-[#68696a]"><input type="checkbox" disabled />反転してプロット</label>
              <label class="flex h-10 items-center gap-3 text-[#68696a]"><input type="checkbox" disabled />ネガ出力プロット</label>
              <label class="flex h-10 items-center gap-3"><input type="checkbox" checked />プロット前にゾーンの塗りつぶしをチェック</label>
            </div>
          </div>

          <!-- Gerber options -->
          <h2 class="mt-5 h-7 pt-[1px] pl-6 text-[20px] font-medium">ガーバー オプション</h2>
          <div class="flex h-[225px] justify-between rounded-xl border-2 border-[#45484a] bg-[#37383a] pr-[41px] pl-[31px]">
            <div class="flex flex-col gap-[6px] pt-5">
              <label class="flex h-10 items-center gap-3"><input type="checkbox" />Protelの拡張子を使用</label>
              <label class="flex h-10 items-center gap-3"><input type="checkbox" checked />ガーバー ジョブ ファイルを生成</label>
            </div>
            <div class="flex w-[538px] flex-col gap-[6px] pt-5">
              <div class="flex h-10 items-center justify-between">
                <label for="coords">座標フォーマット:</label>
                <div class="relative">
                  <select id="coords" class="h-10 w-[327px] appearance-none rounded-[10px] border-t border-[#808484] bg-[#666a6b] pl-4"><option>4.6, 単位 mm</option></select>
                  <span class="pointer-events-none absolute top-1 right-[3px] grid h-8 w-[31px] place-items-center rounded-[7px] bg-[#2f64dc]">
                    <svg class="h-6 w-4" viewBox="0 0 16 24" fill="none" stroke="#fff" stroke-width="3"><path d="M2 8l6-6 6 6M2 16l6 6 6-6"/></svg>
                  </span>
                </div>
              </div>
              <label class="flex h-10 items-center gap-3"><input type="checkbox" checked />拡張 X2 フォーマットを使用 (推奨)</label>
              <label class="flex h-10 items-center gap-3"><input type="checkbox" checked />ネットリスト属性を含む</label>
              <label class="flex h-10 items-center gap-3"><input type="checkbox" />アパーチャ マクロを無効化 (非推奨)</label>
            </div>
          </div>
        </div>
      </div>

      <!-- Output messages -->
      <h2 class="mt-[21px] h-7 pt-[1px] pl-6 text-[20px] font-medium">出力メッセージ</h2>
      <div class="h-[271px] rounded-xl border-2 border-[#45484a] bg-[#37383a] px-[29px] pt-[30px]">
        <textarea aria-label="出力メッセージ" readonly class="block h-[164px] w-full resize-none bg-[#171717]"></textarea>
        <div class="mt-[10px] -ml-[6px] flex h-10 items-center">
          <span class="w-[70px]">表示:</span>
          <label class="flex w-[202px] items-center gap-3"><input type="checkbox" />すべて</label>
          <label class="flex items-center gap-3"><input type="checkbox" checked />エラー</label>
          <span class="mr-[70px] ml-[20px] grid size-[30px] place-items-center rounded-full bg-[#3a8522] text-[20px] font-bold text-white">0</span>
          <label class="flex items-center gap-3"><input type="checkbox" checked />警告</label>
          <span class="mr-[70px] ml-[20px] grid size-[30px] place-items-center rounded-full bg-[#3a8522] text-[20px] font-bold text-white">0</span>
          <label class="flex w-[178px] items-center gap-3"><input type="checkbox" checked />動作</label>
          <label class="flex items-center gap-3"><input type="checkbox" checked />情報</label>
          <button class="ml-auto h-10 w-[168px] rounded-[10px] border-t border-[#808484] bg-[#666a6b]">保存...</button>
        </div>
      </div>

      <div class="mt-[23px] flex items-center pr-[6px] pl-[9px]">
        <button class="h-10 w-[196px] rounded-[10px] border-t border-[#808182] bg-[#656668]">DRC を実行...</button>
        <span class="ml-[20px]">(5 既知の DRC 違反; 0 除外)</span>
        <button class="ml-auto h-10 w-[168px] rounded-[10px] border-t border-[#808182] bg-[#656668]">閉じる</button>
        <button class="ml-6 h-10 w-[310px] rounded-[10px] border-t border-[#808182] bg-[#656668]">ドリル ファイルを生成...</button>
        <button class="ml-6 h-10 w-[168px] rounded-[10px] border-t border-[#5c86e6] bg-[#2f64dc]">プロット</button>
      </div>
    </div>
  </section>

  <script>
    const layers = ["F.Cu", "B.Cu", "F.Adhesive", "B.Adhesive", "F.Paste", "B.Paste", "F.Silkscreen", "B.Silkscreen", "F.Mask", "B.Mask", "User.Drawings", "User.Comments", "User.Eco1", "User.Eco2", "Edge.Cuts", "Margin"];
    const plotted = ["F.Cu", "B.Cu", "F.Paste", "B.Paste", "F.Silkscreen", "B.Silkscreen", "F.Mask", "B.Mask", "Edge.Cuts"];
    const allLayers = ["B.Cu", "B.Mask", "B.Paste", "B.Silkscreen", "B.Adhesive", "B.Courtyard", "B.Fab", "F.Cu", "F.Mask", "F.Paste", "F.Silkscreen", "F.Adhesive", "F.Courtyard", "F.Fab", ""];
    const filters = ["すべてのアイテム", "ロックしたアイテム", "フットプリント", "テキスト", "配線", "ビア", "パッド", "図形", "ゾーン", "ルールエリア", "寸法", "その他のアイテム"];

    function layerRow(name, on) {
      return `<li><label class="flex h-9 items-center gap-[66px] pl-[36px] text-[25px] leading-6 whitespace-nowrap"><input type="checkbox" ${on ? "checked" : ""}>${name}</label></li>`;
    }
    document.getElementById("layers").innerHTML = layers.map(n => layerRow(n, plotted.includes(n))).join("");
    document.getElementById("all-layers").innerHTML = allLayers.map(n => layerRow(n, false)).join("");
    document.getElementById("filters").innerHTML = filters.map((n, i) =>
      `<label class="flex h-8 items-center gap-[13px] whitespace-nowrap"><input type="checkbox" data-gray ${i === 1 ? "" : "checked"}>${n}</label>`).join("");

    // form control look
    document.querySelectorAll("input[type=checkbox]").forEach(el => {
      el.className = "grid size-7 shrink-0 appearance-none place-items-center rounded-[7px] border-t border-[#6c6f70] bg-linear-to-b from-[#4c4f50] to-[#656668] shadow-sm before:hidden before:h-[19px] before:w-[11px] before:-translate-y-[2px] before:rotate-[35deg] before:border-r-4 before:border-b-4 before:border-white checked:before:block disabled:opacity-50";
      if (!("gray" in el.dataset)) el.className += " checked:border-[#6b9cee] checked:from-[#3a78e0] checked:to-[#2f68cc]";
    });
    document.querySelectorAll("input[type=radio]").forEach(el => {
      el.className = "grid size-7 shrink-0 appearance-none place-items-center rounded-full border-t border-[#6c6f70] bg-linear-to-b from-[#555859] to-[#6a6b6d] shadow-sm before:hidden before:size-[11px] before:rounded-full before:bg-white checked:border-[#6b9cee] checked:from-[#3a78e0] checked:to-[#2f68cc] checked:before:block";
    });

    // background grid, 182px apart
    let dots = "";
    for (let x = 116; x < 2352; x += 182) {
      for (let y = 235; y < 1724; y += 182) {
        dots += `<rect x="${x}" y="${y}" width="${x === 662 ? 4 : 2}" height="${y === 1327 ? 4 : 2}"/>`;
      }
    }
    document.getElementById("grid-dots").innerHTML = dots;

    // plated holes: x, y, number, net
    const pads = [
      [767, 1254, 35, "x"], [813, 1254, 36, "x"], [767, 1300, 37, "x"], [813, 1300, 38, "x"], [767, 1346, 39, "GND"], [813, 1346, 40, "x"],
      [1217, 1342, 1, "x"], [1264, 1342, 2, ""], [1310, 1342, 3, ""], [1356, 1342, 4, "+3.3V"], [1402, 1342, 5, "+5V"], [1449, 1342, 6, "GND"], [1495, 1342, 7, "GND"], [1541, 1342, 8, ""],
      [1634, 1342, 9, ""], [1680, 1342, 10, ""], [1727, 1342, 11, ""], [1773, 1342, 12, ""], [1819, 1342, 13, ""], [1865, 1342, 14, ""],
      [1432, 1245, 1, "x"], [1478, 1245, 2, "x"], [1524, 1245, 3, "GND"], [1571, 1245, 4, "+5V"],
    ];
    function drawPads() {
      let under = "", over = "";
      pads.forEach(([x, y, n, net]) => {
        const square = n === 1;
        if (x > 850) under += square
          ? `<rect x="${x - 24}" y="${y - 24}" width="48" height="48" rx="6" fill="#001023"/>`
          : `<circle cx="${x}" cy="${y}" r="24" fill="#001023"/>`;
        if (x > 850 && net === "GND") under += `<path d="M${x} ${y - 25}v50" stroke="#8a3f55" stroke-width="9"/>`;
        over += square
          ? `<rect x="${x - 15}" y="${y - 15}" width="30" height="30" fill="#c83232"/>`
          : `<circle cx="${x}" cy="${y}" r="16" fill="#c83232"/>`;
        over += `<circle cx="${x}" cy="${y}" r="12" fill="#001023" stroke="#e3b52c" stroke-width="4"/>`;
        over += `<text x="${x}" y="${y - 3}" font-size="13" text-anchor="middle" fill="#c4c8ca">${n}</text>`;
        over += `<text x="${x}" y="${y + 12}" font-size="9" text-anchor="middle" fill="#c4c8ca">${net}</text>`;
      });
      const vias = [[935, 1236], [1026, 1236], [935, 1327], [1026, 1327], [1117, 1327], [1296, 1249], [1328, 1223], [1359, 1223], [1328, 1249], [1357, 1249], [1328, 1269], [1357, 1273], [1357, 1300], [1663, 1236], [1754, 1236], [1845, 1236], [1936, 1236]];
      vias.forEach(([x, y]) => {
        over += `<circle cx="${x}" cy="${y}" r="4" fill="#e3b52c" stroke="#c83232" stroke-width="2"/>`;
      });
      document.getElementById("pads").innerHTML = under + `<path d="M1449 1342h46" stroke="#8a3f55" stroke-width="9"/>` + over;
    }
    drawPads();
  </script>
</body>
</html>
